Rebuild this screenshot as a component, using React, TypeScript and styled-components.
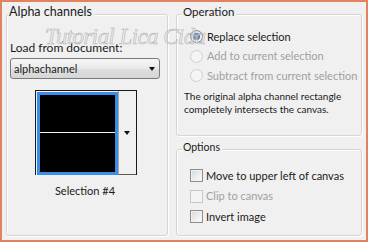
import React from 'react';
import styled, { createGlobalStyle } from 'styled-components';

const GlobalStyle = createGlobalStyle`
  html, body {
    margin: 0;
    padding: 0;
    background: #f0f0f0;
  }
  body {
    font-family: Lato, 'Noto Sans', sans-serif;
    font-size: 11px;
    color: #1a1a1a;
  }
`;

type disabledStyle = {
  $disabled?: boolean;
};

type radioStyle = {
  $checked?: boolean;
  $disabled?: boolean;
};

type legendStyle = {
  $size?: number;
};

const Frame = styled.div`
  position: relative;
  box-sizing: border-box;
  width: 368px;
  height: 242px;
  border: 2px solid #e3825e;
  background: #f0f0f0;
  display: flex;
  gap: 8px;
  padding: 2px 4px 4px 4px;
  overflow: hidden;
`;

const Group = styled.fieldset`
  box-sizing: border-box;
  margin: 0;
  min-width: 0;
  border: 1px solid #d5d5d5;
  border-radius: 3px;
  box-shadow: inset 1px 1px 0 #ffffff, 1px 1px 0 #ffffff;
`;

const LeftGroup = styled(Group)`
  width: 162px;
  padding: 0 7px 0 3px;
  display: flex;
  flex-direction: column;
`;

const Column = styled.div`
  width: 186px;
  display: flex;
  flex-direction: column;
  gap: 3px;
`;

const OperationGroup = styled(Group)`
  padding: 0 6px 19px 7px;
`;

const OptionsGroup = styled(Group)`
  flex: 1;
  padding: 6px 6px 0 7px;
`;

const Legend = styled.legend`
  padding: 0 2px 5px 1px;
  margin-left: -2px;
  font-size: ${({ $size }: legendStyle) => $size || 11.5}px;
  line-height: 16px;
  background: #f0f0f0;
  color: #1a1a1a;
`;

const FieldLabel = styled.div`
  margin-top: 15px;
  font-size: 12px;
  line-height: 16px;
`;

const Select = styled.div`
  box-sizing: border-box;
  margin-top: 2px;
  height: 21px;
  border: 1px solid #7a7a7a;
  border-radius: 3px;
  background: linear-gradient(#f6f6f6, #e9e9e9 50%, #dedede 51%, #d6d6d6);
  display: flex;
  align-items: center;
  justify-content: space-between;
  padding: 0 4px 0 3px;
  line-height: 16px;
`;

const Arrow = styled.span`
  flex-shrink: 0;
  width: 0;
  height: 0;
  border-left: 3.5px solid transparent;
  border-right: 3.5px solid transparent;
  border-top: 4px solid #111;
`;

const Preview = styled.div`
  box-sizing: border-box;
  align-self: center;
  margin: 11px 0 0 1px;
  width: 102px;
  height: 85px;
  display: flex;
  border-top: 1px solid #1a1a1a;
  border-left: 1px solid #1a1a1a;
  border-right: 1px solid #1a1a1a;
  background: #f0f0f0;
`;

const Thumb = styled.div`
  box-sizing: border-box;
  flex: 1;
  margin: 1px 0 0 1px;
  border: 3px solid #3a8ee8;
  background: #000;
  display: flex;
  flex-direction: column;
  justify-content: center;
`;

const Guide = styled.div`
  height: 1px;
  margin-top: -3px;
  background: #f4f4f4;
`;

const DropButton = styled.div`
  box-sizing: border-box;
  width: 18px;
  border-left: 1px solid #a8a8a8;
  border-bottom: 1px solid #5a5a5a;
  display: flex;
  align-items: center;
  justify-content: center;
  padding-top: 1px;
`;

const Caption = styled.div`
  margin-top: 8px;
  text-align: center;
  line-height: 16px;
`;

const Row = styled.div`
  display: flex;
  align-items: center;
  gap: 4px;
  height: 19.5px;
  padding-left: 6px;
`;

const CheckRow = styled(Row)`
  height: 20.5px;
  gap: 3px;
  padding-left: 6px;
`;

const Label = styled.span`
  line-height: 16px;
  white-space: nowrap;
  color: ${({ $disabled }: disabledStyle) => ($disabled ? '#a0a0a0' : '#1a1a1a')};
`;

const Radio = styled.span`
  box-sizing: border-box;
  flex-shrink: 0;
  width: 13px;
  height: 13px;
  border-radius: 50%;
  border: 1px solid ${({ $disabled }: radioStyle) => ($disabled ? '#d0d0d0' : '#8a8a8a')};
  background: ${({ $disabled }: radioStyle) =>
    $disabled ? '#f4f4f4' : 'linear-gradient(135deg, #d4d4d4, #fbfbfb)'};
  display: flex;
  align-items: center;
  justify-content: center;
  &::after {
    content: '';
    display: ${({ $checked }: radioStyle) => ($checked ? 'block' : 'none')};
    width: 5px;
    height: 5px;
    border-radius: 50%;
    background: radial-gradient(circle at 40% 35%, #a9d2f7, #24548c 75%);
    box-shadow: 0 0 0 1px #5d7fa8;
  }
`;

const Checkbox = styled.span`
  box-sizing: border-box;
  flex-shrink: 0;
  width: 13px;
  height: 13px;
  border: 1px solid ${({ $disabled }: disabledStyle) => ($disabled ? '#c8c8c8' : '#8e8f8f')};
  background: ${({ $disabled }: disabledStyle) =>
    $disabled ? '#f4f4f4' : 'linear-gradient(135deg, #d6d6d6, #f7f7f7 80%)'};
  box-shadow: inset 0 0 0 1px ${({ $disabled }: disabledStyle) => ($disabled ? '#f4f4f4' : '#f0f0f0')};
`;

const Note = styled.div`
  margin-top: 4px;
  font-size: 10px;
  line-height: 13px;
  white-space: nowrap;
`;

const Watermark = styled.div`
  position: absolute;
  left: 43px;
  top: 24px;
  font-family: 'Liberation Serif', serif;
  font-style: italic;
  font-size: 23px;
  line-height: 22px;
  letter-spacing: -0.6px;
  white-space: nowrap;
  color: rgba(235, 235, 235, 0.6);
  -webkit-text-stroke: 0.6px rgba(140, 140, 140, 0.6);
  pointer-events: none;
`;

const operations = [
  { text: 'Replace selection', checked: true, disabled: false },
  { text: 'Add to current selection', checked: false, disabled: true },
  { text: 'Subtract from current selection', checked: false, disabled: true },
];

const options = [
  { text: 'Move to upper left of canvas', disabled: false },
  { text: 'Clip to canvas', disabled: true },
  { text: 'Invert image', disabled: false },
];

export default function App() {
  return (
    <>
      <GlobalStyle />
      <Frame>
        <LeftGroup>
          <Legend $size={12.5}>Alpha channels</Legend>
          <FieldLabel>Load from document:</FieldLabel>
          <Select>
            <span>alphachannel</span>
            <Arrow />
          </Select>
          <Preview>
            <Thumb>
              <Guide />
            </Thumb>
            <DropButton>
              <Arrow />
            </DropButton>
          </Preview>
          <Caption>Selection #4</Caption>
        </LeftGroup>
        <Column>
          <OperationGroup>
            <Legend>Operation</Legend>
            <div style={{ marginTop: 2 }}>
              {operations.map((op) => (
                <Row key={op.text}>
                  <Radio $checked={op.checked} $disabled={op.disabled} />
                  <Label $disabled={op.disabled}>{op.text}</Label>
                </Row>
              ))}
            </div>
            <Note>
              The original alpha channel rectangle
              <br />
              completely intersects the canvas.
            </Note>
          </OperationGroup>
          <OptionsGroup>
            <Legend $size={10.5}>Options</Legend>
            {options.map((opt) => (
              <CheckRow key={opt.text}>
                <Checkbox $disabled={opt.disabled} />
                <Label $disabled={opt.disabled}>{opt.text}</Label>
              </CheckRow>
            ))}
          </OptionsGroup>
        </Column>
        <Watermark>Tutorial Lica Cida</Watermark>
      </Frame>
    </>
  );
}
